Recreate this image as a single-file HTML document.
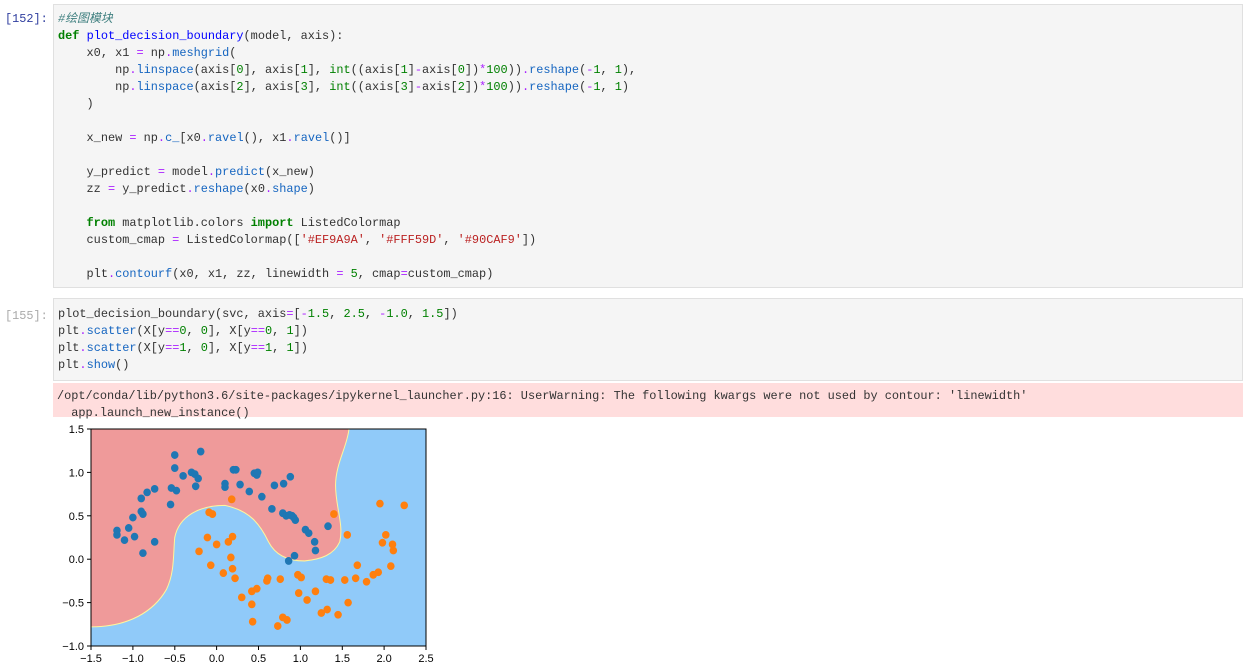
<!DOCTYPE html>
<html><head><meta charset="utf-8"><style>
body{margin:0;background:#fff;width:1243px;height:669px;overflow:hidden;font-family:"Liberation Mono",monospace;}
.cell{position:absolute;left:53px;right:0;background:#f5f5f5;border:1px solid #e0e0e0;}
.prompt{position:absolute;left:5px;color:#303f9f;font-size:11.9px;font-family:"Liberation Mono",monospace;}
pre{margin:0;font-family:"Liberation Mono","Noto Sans CJK SC",monospace;font-size:11.9px;line-height:17px;color:#333;padding:6px 0 0 4px;}
.k{color:#008000;font-weight:bold}.f{color:#0000ff}.n{color:#008000}.o{color:#aa22ff}.s{color:#ba2121}.c{color:#408080;font-style:italic}.m{color:#1565c0}
</style></head><body>
<div class="prompt" style="top:12px">[152]:</div>
<div class="cell" style="top:4px;height:282px"><pre><span class="c">#绘图模块</span>
<span class="k">def</span> <span class="f">plot_decision_boundary</span>(model, axis):
    x0, x1 <span class="o">=</span> np<span class="o">.</span><span class="m">meshgrid</span>(
        np<span class="o">.</span><span class="m">linspace</span>(axis[<span class="n">0</span>], axis[<span class="n">1</span>], <span class="n">int</span>((axis[<span class="n">1</span>]<span class="o">-</span>axis[<span class="n">0</span>])<span class="o">*</span><span class="n">100</span>))<span class="o">.</span><span class="m">reshape</span>(<span class="o">-</span><span class="n">1</span>, <span class="n">1</span>),
        np<span class="o">.</span><span class="m">linspace</span>(axis[<span class="n">2</span>], axis[<span class="n">3</span>], <span class="n">int</span>((axis[<span class="n">3</span>]<span class="o">-</span>axis[<span class="n">2</span>])<span class="o">*</span><span class="n">100</span>))<span class="o">.</span><span class="m">reshape</span>(<span class="o">-</span><span class="n">1</span>, <span class="n">1</span>)
    )

    x_new <span class="o">=</span> np<span class="o">.</span><span class="m">c_</span>[x0<span class="o">.</span><span class="m">ravel</span>(), x1<span class="o">.</span><span class="m">ravel</span>()]

    y_predict <span class="o">=</span> model<span class="o">.</span><span class="m">predict</span>(x_new)
    zz <span class="o">=</span> y_predict<span class="o">.</span><span class="m">reshape</span>(x0<span class="o">.</span><span class="m">shape</span>)

    <span class="k">from</span> matplotlib.colors <span class="k">import</span> ListedColormap
    custom_cmap <span class="o">=</span> ListedColormap([<span class="s">'#EF9A9A'</span>, <span class="s">'#FFF59D'</span>, <span class="s">'#90CAF9'</span>])

    plt<span class="o">.</span><span class="m">contourf</span>(x0, x1, zz, linewidth <span class="o">=</span> <span class="n">5</span>, cmap<span class="o">=</span>custom_cmap)</pre></div>
<div class="prompt" style="top:309px;color:#aaa">[155]:</div>
<div class="cell" style="top:298px;height:81px"><pre style="padding-top:7px">plot_decision_boundary(svc, axis<span class="o">=</span>[<span class="o">-</span><span class="n">1.5</span>, <span class="n">2.5</span>, <span class="o">-</span><span class="n">1.0</span>, <span class="n">1.5</span>])
plt<span class="o">.</span><span class="m">scatter</span>(X[y<span class="o">==</span><span class="n">0</span>, <span class="n">0</span>], X[y<span class="o">==</span><span class="n">0</span>, <span class="n">1</span>])
plt<span class="o">.</span><span class="m">scatter</span>(X[y<span class="o">==</span><span class="n">1</span>, <span class="n">0</span>], X[y<span class="o">==</span><span class="n">1</span>, <span class="n">1</span>])
plt<span class="o">.</span><span class="m">show</span>()</pre></div>
<div style="position:absolute;top:383px;left:53px;right:0;height:34px;background:#fdd"><pre style="padding:5px 0 0 4px">/opt/conda/lib/python3.6/site-packages/ipykernel_launcher.py:16: UserWarning: The following kwargs were not used by contour: 'linewidth'
  app.launch_new_instance()</pre></div>
<svg style="position:absolute;left:0;top:0" width="1243" height="669">
<g transform="translate(91,429) scale(83.75,-86.8) translate(1.5,-1.5)">
<rect x="-1.5" y="-1" width="4" height="2.5" fill="#90caf9"/>
<path d="M-1.5,1.5 L1.58,1.5 C1.56,1.3 1.42,1.1 1.42,0.85 C1.42,0.6 1.52,0.4 1.47,0.2 C1.4,0.05 1.25,0 1.05,-0.02 C0.85,-0.02 0.7,0.05 0.62,0.2 C0.52,0.4 0.4,0.56 0.1,0.62 C-0.2,0.62 -0.45,0.5 -0.5,0.25 C-0.52,0.05 -0.5,-0.15 -0.6,-0.35 C-0.75,-0.6 -1.05,-0.78 -1.5,-0.78 Z" fill="#ef9a9a" stroke="#fff59d" stroke-width="0.012"/>
<g fill="#1f77b4">
<circle cx="-1.19" cy="0.33" r="0.045"/><circle cx="-1.19" cy="0.28" r="0.045"/><circle cx="-1.1" cy="0.22" r="0.045"/><circle cx="-1.05" cy="0.36" r="0.045"/><circle cx="-1.0" cy="0.48" r="0.045"/><circle cx="-0.98" cy="0.26" r="0.045"/><circle cx="-0.9" cy="0.7" r="0.045"/><circle cx="-0.9" cy="0.55" r="0.045"/><circle cx="-0.88" cy="0.52" r="0.045"/><circle cx="-0.88" cy="0.07" r="0.045"/><circle cx="-0.83" cy="0.77" r="0.045"/><circle cx="-0.74" cy="0.81" r="0.045"/><circle cx="-0.74" cy="0.2" r="0.045"/><circle cx="-0.55" cy="0.63" r="0.045"/><circle cx="-0.54" cy="0.82" r="0.045"/><circle cx="-0.5" cy="1.2" r="0.045"/><circle cx="-0.5" cy="1.05" r="0.045"/><circle cx="-0.48" cy="0.79" r="0.045"/><circle cx="-0.4" cy="0.96" r="0.045"/><circle cx="-0.3" cy="1.0" r="0.045"/><circle cx="-0.26" cy="0.98" r="0.045"/><circle cx="-0.25" cy="0.84" r="0.045"/><circle cx="-0.22" cy="0.93" r="0.045"/><circle cx="-0.19" cy="1.24" r="0.045"/><circle cx="0.1" cy="0.87" r="0.045"/><circle cx="0.1" cy="0.83" r="0.045"/><circle cx="0.2" cy="1.03" r="0.045"/><circle cx="0.23" cy="1.03" r="0.045"/><circle cx="0.28" cy="0.86" r="0.045"/><circle cx="0.39" cy="0.78" r="0.045"/><circle cx="0.45" cy="0.99" r="0.045"/><circle cx="0.48" cy="0.97" r="0.045"/><circle cx="0.49" cy="1.0" r="0.045"/><circle cx="0.54" cy="0.72" r="0.045"/><circle cx="0.66" cy="0.58" r="0.045"/><circle cx="0.69" cy="0.85" r="0.045"/><circle cx="0.8" cy="0.87" r="0.045"/><circle cx="0.79" cy="0.53" r="0.045"/><circle cx="0.83" cy="0.5" r="0.045"/><circle cx="0.87" cy="0.51" r="0.045"/><circle cx="0.88" cy="0.95" r="0.045"/><circle cx="0.9" cy="0.5" r="0.045"/><circle cx="0.92" cy="0.48" r="0.045"/><circle cx="0.94" cy="0.45" r="0.045"/><circle cx="1.06" cy="0.34" r="0.045"/><circle cx="1.1" cy="0.3" r="0.045"/><circle cx="1.17" cy="0.2" r="0.045"/><circle cx="1.18" cy="0.1" r="0.045"/><circle cx="1.33" cy="0.38" r="0.045"/><circle cx="0.93" cy="0.04" r="0.045"/><circle cx="0.86" cy="-0.02" r="0.045"/>
</g>
<g fill="#ff7f0e">
<circle cx="0.18" cy="0.69" r="0.045"/><circle cx="-0.09" cy="0.54" r="0.045"/><circle cx="-0.05" cy="0.52" r="0.045"/><circle cx="-0.11" cy="0.25" r="0.045"/><circle cx="0.0" cy="0.17" r="0.045"/><circle cx="0.14" cy="0.2" r="0.045"/><circle cx="0.19" cy="0.26" r="0.045"/><circle cx="-0.21" cy="0.09" r="0.045"/><circle cx="0.17" cy="0.02" r="0.045"/><circle cx="-0.07" cy="-0.07" r="0.045"/><circle cx="0.08" cy="-0.16" r="0.045"/><circle cx="0.19" cy="-0.11" r="0.045"/><circle cx="0.22" cy="-0.22" r="0.045"/><circle cx="0.3" cy="-0.44" r="0.045"/><circle cx="0.42" cy="-0.37" r="0.045"/><circle cx="0.48" cy="-0.34" r="0.045"/><circle cx="0.42" cy="-0.52" r="0.045"/><circle cx="0.43" cy="-0.72" r="0.045"/><circle cx="0.6" cy="-0.25" r="0.045"/><circle cx="0.61" cy="-0.22" r="0.045"/><circle cx="0.76" cy="-0.23" r="0.045"/><circle cx="0.97" cy="-0.18" r="0.045"/><circle cx="1.01" cy="-0.21" r="0.045"/><circle cx="0.98" cy="-0.39" r="0.045"/><circle cx="1.08" cy="-0.47" r="0.045"/><circle cx="1.18" cy="-0.37" r="0.045"/><circle cx="1.4" cy="0.52" r="0.045"/><circle cx="1.56" cy="0.28" r="0.045"/><circle cx="1.31" cy="-0.23" r="0.045"/><circle cx="1.36" cy="-0.24" r="0.045"/><circle cx="1.53" cy="-0.24" r="0.045"/><circle cx="1.66" cy="-0.22" r="0.045"/><circle cx="1.68" cy="-0.07" r="0.045"/><circle cx="1.79" cy="-0.26" r="0.045"/><circle cx="1.87" cy="-0.18" r="0.045"/><circle cx="1.93" cy="-0.15" r="0.045"/><circle cx="1.95" cy="0.64" r="0.045"/><circle cx="2.02" cy="0.28" r="0.045"/><circle cx="1.98" cy="0.19" r="0.045"/><circle cx="2.1" cy="0.17" r="0.045"/><circle cx="2.11" cy="0.1" r="0.045"/><circle cx="2.08" cy="-0.08" r="0.045"/><circle cx="2.24" cy="0.62" r="0.045"/><circle cx="1.57" cy="-0.5" r="0.045"/><circle cx="1.45" cy="-0.64" r="0.045"/><circle cx="1.32" cy="-0.58" r="0.045"/><circle cx="1.25" cy="-0.62" r="0.045"/><circle cx="0.73" cy="-0.77" r="0.045"/><circle cx="0.79" cy="-0.67" r="0.045"/><circle cx="0.84" cy="-0.7" r="0.045"/>
</g>
</g>
<rect x="91" y="429" width="335" height="217" fill="none" stroke="#000" stroke-width="1"/>
<g stroke="#000" stroke-width="1">
<line x1="91" y1="646" x2="91" y2="650"/><line x1="132.9" y1="646" x2="132.9" y2="650"/><line x1="174.8" y1="646" x2="174.8" y2="650"/><line x1="216.6" y1="646" x2="216.6" y2="650"/><line x1="258.5" y1="646" x2="258.5" y2="650"/><line x1="300.4" y1="646" x2="300.4" y2="650"/><line x1="342.3" y1="646" x2="342.3" y2="650"/><line x1="384.1" y1="646" x2="384.1" y2="650"/><line x1="426" y1="646" x2="426" y2="650"/>
<line x1="87" y1="429" x2="91" y2="429"/><line x1="87" y1="472.4" x2="91" y2="472.4"/><line x1="87" y1="515.8" x2="91" y2="515.8"/><line x1="87" y1="559.2" x2="91" y2="559.2"/><line x1="87" y1="602.6" x2="91" y2="602.6"/><line x1="87" y1="646" x2="91" y2="646"/>
</g>
<g font-family="Liberation Sans,sans-serif" font-size="11" fill="#000" text-anchor="middle">
<text x="91" y="662">−1.5</text><text x="132.9" y="662">−1.0</text><text x="174.8" y="662">−0.5</text><text x="216.6" y="662">0.0</text><text x="258.5" y="662">0.5</text><text x="300.4" y="662">1.0</text><text x="342.3" y="662">1.5</text><text x="384.1" y="662">2.0</text><text x="426" y="662">2.5</text>
</g>
<g font-family="Liberation Sans,sans-serif" font-size="11" fill="#000" text-anchor="end">
<text x="84" y="433">1.5</text><text x="84" y="476.4">1.0</text><text x="84" y="519.8">0.5</text><text x="84" y="563.2">0.0</text><text x="84" y="606.6">−0.5</text><text x="84" y="650">−1.0</text>
</g>
</svg>
</body></html>
